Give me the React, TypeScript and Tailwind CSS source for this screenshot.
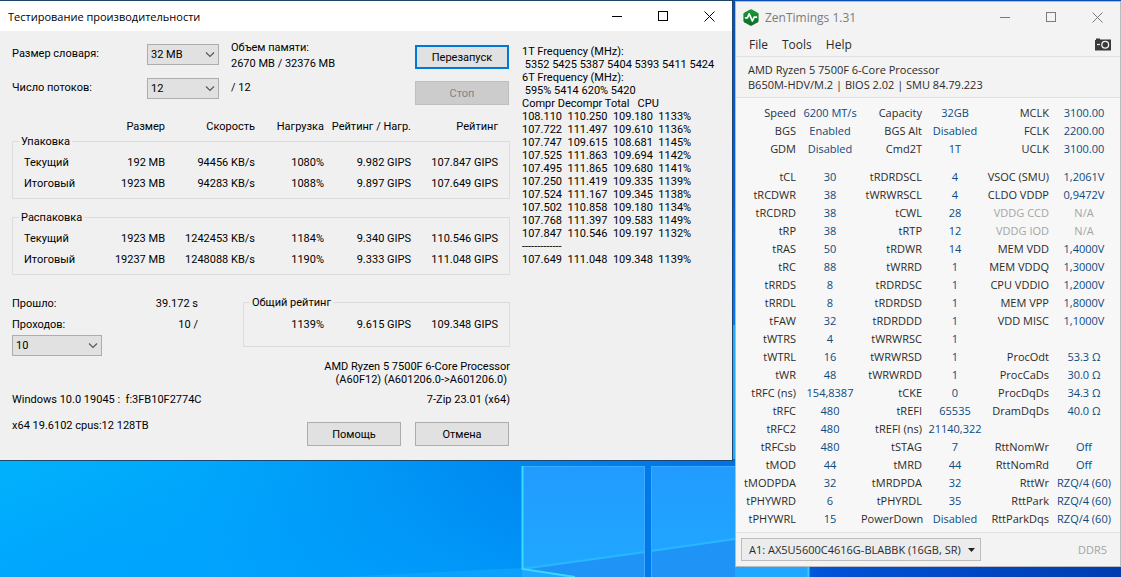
import type { ReactNode } from "react";

type Row = string[];

const packing: Row[] = [
  ["Текущий", "192 MB", "94456 KB/s", "1080%", "9.982 GIPS", "107.847 GIPS"],
  ["Итоговый", "1923 MB", "94283 KB/s", "1088%", "9.897 GIPS", "107.649 GIPS"],
];

const unpacking: Row[] = [
  ["Текущий", "1923 MB", "1242453 KB/s", "1184%", "9.340 GIPS", "110.546 GIPS"],
  ["Итоговый", "19237 MB", "1248088 KB/s", "1190%", "9.333 GIPS", "111.048 GIPS"],
];

const log = `1T Frequency (MHz):
 5352 5425 5387 5404 5393 5411 5424
6T Frequency (MHz):
 595% 5414 620% 5420
Compr Decompr Total   CPU
108.110  110.250  109.180  1133%
107.722  111.497  109.610  1136%
107.747  109.615  108.681  1145%
107.525  111.863  109.694  1142%
107.495  111.865  109.680  1141%
107.250  111.419  109.335  1139%
107.524  111.167  109.345  1138%
107.502  110.858  109.180  1134%
107.768  111.397  109.583  1149%
107.847  110.546  109.197  1132%
-------------
107.649  111.048  109.348  1139%`;

const clocks: Row[] = [
  ["Speed", "6200 MT/s", "Capacity", "32GB", "MCLK", "3100.00"],
  ["BGS", "Enabled", "BGS Alt", "Disabled", "FCLK", "2200.00"],
  ["GDM", "Disabled", "Cmd2T", "1T", "UCLK", "3100.00"],
];

const timings: Row[] = [
  ["tCL", "30", "tRDRDSCL", "4", "VSOC (SMU)", "1,2061V"],
  ["tRCDWR", "38", "tWRWRSCL", "4", "CLDO VDDP", "0,9472V"],
  ["tRCDRD", "38", "tCWL", "28", "VDDG CCD", "N/A"],
  ["tRP", "38", "tRTP", "12", "VDDG IOD", "N/A"],
  ["tRAS", "50", "tRDWR", "14", "MEM VDD", "1,4000V"],
  ["tRC", "88", "tWRRD", "1", "MEM VDDQ", "1,3000V"],
  ["tRRDS", "8", "tRDRDSC", "1", "CPU VDDIO", "1,2000V"],
  ["tRRDL", "8", "tRDRDSD", "1", "MEM VPP", "1,8000V"],
  ["tFAW", "32", "tRDRDDD", "1", "VDD MISC", "1,1000V"],
  ["tWTRS", "4", "tWRWRSC", "1", "", ""],
  ["tWTRL", "16", "tWRWRSD", "1", "ProcOdt", "53.3 Ω"],
  ["tWR", "48", "tWRWRDD", "1", "ProcCaDs", "30.0 Ω"],
  ["tRFC (ns)", "154,8387", "tCKE", "0", "ProcDqDs", "34.3 Ω"],
  ["tRFC", "480", "tREFI", "65535", "DramDqDs", "40.0 Ω"],
  ["tRFC2", "480", "tREFI (ns)", "21140,322", "", ""],
  ["tRFCsb", "480", "tSTAG", "7", "RttNomWr", "Off"],
  ["tMOD", "44", "tMRD", "44", "RttNomRd", "Off"],
  ["tMODPDA", "32", "tMRDPDA", "32", "RttWr", "RZQ/4 (60)"],
  ["tPHYWRD", "6", "tPHYRDL", "35", "RttPark", "RZQ/4 (60)"],
  ["tPHYWRL", "15", "PowerDown", "Disabled", "RttParkDqs", "RZQ/4 (60)"],
];

function Wallpaper() {
  return (
    <svg className="absolute inset-0 h-full w-full" viewBox="0 0 1121 577" preserveAspectRatio="xMidYMax slice" aria-hidden="true">
      <defs>
        <linearGradient id="sky" x1="0" y1="0" x2="1" y2="0">
          <stop offset="0" stopColor="#00b2fc" />
          <stop offset="0.18" stopColor="#00a8fb" />
          <stop offset="0.33" stopColor="#0098f6" />
          <stop offset="0.46" stopColor="#0088f0" />
          <stop offset="0.66" stopColor="#0070e6" />
          <stop offset="0.74" stopColor="#0052d6" />
          <stop offset="1" stopColor="#003cb0" />
        </linearGradient>
        <linearGradient id="glow" x1="0" y1="0" x2="0" y2="1">
          <stop offset="0" stopColor="#0098ff" stopOpacity="0" />
          <stop offset="1" stopColor="#00a0ff" stopOpacity="0.6" />
        </linearGradient>
        <linearGradient id="top" x1="0" y1="0" x2="0" y2="1">
          <stop offset="0" stopColor="#0a4fb8" />
          <stop offset="0.6" stopColor="#0060e0" />
          <stop offset="1" stopColor="#0078ff" />
        </linearGradient>
        <linearGradient id="pane" x1="0" y1="0" x2="0" y2="1">
          <stop offset="0" stopColor="#229bff" />
          <stop offset="1" stopColor="#20a8ff" />
        </linearGradient>
      </defs>
      <rect width="1121" height="577" fill="url(#sky)" />
      <rect y="461" width="522" height="116" fill="url(#glow)" />
      <rect x="522" width="599" height="325" fill="url(#top)" />
      <rect x="651" y="325" width="157" height="134" fill="#22a8ff" />
      <path d="M340 577 L522 568 L522 577Z" fill="#12a8ff" opacity="0.6" />
      <rect x="522" y="466" width="123" height="111" fill="url(#pane)" />
      <rect x="651" y="466" width="157" height="111" fill="url(#pane)" />
      <path d="M522 569 L645 552 V577 H575Z" fill="#1f93f6" />
      <path d="M651 551 L735 539 V577 H651Z" fill="#1f93f6" />
      <path d="M522 569 L645 552 M651 551 L735 539" stroke="#28b8ff" strokeWidth="2" fill="none" />
      <path d="M522 466.5 H645 M651 466.5 H735 M644.5 466 V577 M651.5 466 V577" stroke="#3fabff" strokeWidth="1" fill="none" />
      <path d="M522.5 466 V569 L575 577" stroke="#35dcff" strokeWidth="2" fill="none" />
      <path d="M808.5 466 V577" stroke="#2fd0ff" strokeWidth="2" />
    </svg>
  );
}

function CaptionButtons({ tone }: { tone: string }) {
  return (
    <div className={`flex ${tone}`}>
      <button type="button" aria-label="Свернуть" className="flex h-[30px] w-[46px] items-center justify-center">
        <svg width="11" height="11" viewBox="0 0 11 11"><path d="M0 5.5H10" stroke="currentColor" /></svg>
      </button>
      <button type="button" aria-label="Развернуть" className="flex h-[30px] w-[46px] items-center justify-center">
        <svg width="11" height="11" viewBox="0 0 11 11"><rect x="0.5" y="0.5" width="9" height="9" fill="none" stroke="currentColor" /></svg>
      </button>
      <button type="button" aria-label="Закрыть" className="flex h-[30px] w-[46px] items-center justify-center">
        <svg width="11" height="11" viewBox="0 0 11 11"><path d="M0.5 0.5L10.5 10.5M10.5 0.5L0.5 10.5" stroke="currentColor" /></svg>
      </button>
    </div>
  );
}

function Combo({ id, value, width }: { id: string; value: string; width: string }) {
  return (
    <div className={`relative h-[21px] ${width}`}>
      <select id={id} defaultValue={value} className="h-full w-full appearance-none border border-[#adadad] bg-[#e1e1e1] pl-[3px] text-[11px] leading-[19px]">
        <option>{value}</option>
      </select>
      <svg className="pointer-events-none absolute top-2 right-1" width="10" height="6" viewBox="0 0 10 6" fill="none">
        <path d="M1 0.5L5 4.5L9 0.5" stroke="#555" strokeWidth="1.1" />
      </svg>
    </div>
  );
}

function PushButton({ children }: { children: ReactNode }) {
  return (
    <button type="button" className="h-6 w-[94px] border border-[#adadad] bg-[#e1e1e1]">{children}</button>
  );
}

function StatColumns() {
  return (
    <colgroup>
      <col className="w-[61px]" />
      <col className="w-[80px]" />
      <col className="w-[90px]" />
      <col className="w-[69px]" />
      <col className="w-[87px]" />
      <col className="w-[87px]" />
    </colgroup>
  );
}

function StatGroup({ title, rows, gap }: { title: string; rows: Row[]; gap: string }) {
  return (
    <fieldset className={`min-w-0 border border-[#dcdcdc] px-[11px] py-1 ${gap}`}>
      <legend className="-ml-[5px] px-[2px]">{title}</legend>
      <table className="w-full table-fixed text-right whitespace-nowrap">
        <StatColumns />
        <tbody>
          {rows.map((row) => (
            <tr key={row[0]} className="h-[21px]">
              <th scope="row" className="p-0 text-left font-normal">{row[0]}</th>
              {row.slice(1).map((cell, i) => (
                <td key={i} className="p-0">{cell}</td>
              ))}
            </tr>
          ))}
        </tbody>
      </table>
    </fieldset>
  );
}

function BenchmarkWindow() {
  return (
    <section className="min-w-0 flex-1 self-start border-t border-r border-b border-[#1f4568] bg-[#f0f0f0] font-['Roboto','Liberation_Sans',sans-serif] text-[11px] leading-[13px] text-black">
      <header className="flex h-[30px] items-center justify-between bg-white pl-2">
        <h1 className="font-['Open_Sans','Noto_Sans',sans-serif] text-[11px]">Тестирование производительности</h1>
        <CaptionButtons tone="text-black" />
      </header>
      <div className="grid grid-cols-[498fr_210fr] gap-3 pt-[9px] pb-[14px] pl-3">
        <div>
          <div className="flex">
            <div className="flex w-[135px] flex-col gap-[13px] pt-1">
              <label htmlFor="dict" className="h-[21px] leading-[19px]">Размер словаря:</label>
              <label htmlFor="threads" className="h-[21px] leading-[19px]">Число потоков:</label>
            </div>
            <div className="flex flex-col gap-[13px] pt-1">
              <Combo id="dict" value="32 MB" width="w-[72px]" />
              <Combo id="threads" value="12" width="w-[72px]" />
            </div>
            <div className="flex-1 pl-3 leading-[16px]">
              <p>Объем памяти:</p>
              <p>2670 MB / 32376 MB</p>
              <p className="pt-2">/ 12</p>
            </div>
            <div className="flex flex-col gap-3 pt-[5px] pr-px">
              <button type="button" className="h-6 w-[94px] border-2 border-[#0078d7] bg-[#e1e1e1]">Перезапуск</button>
              <button type="button" disabled className="h-6 w-[94px] border border-[#bfbfbf] bg-[#cccccc] text-[#838383]">Стоп</button>
            </div>
          </div>

          <div className="px-3 pt-[15px]">
            <table className="w-full table-fixed text-right whitespace-nowrap">
              <StatColumns />
              <thead>
                <tr>
                  <td className="p-0" />
                  <th scope="col" className="p-0 font-normal">Размер</th>
                  <th scope="col" className="p-0 font-normal">Скорость</th>
                  <th scope="col" className="p-0 font-normal">Нагрузка</th>
                  <th scope="col" className="p-0 font-normal">Рейтинг / Нагр.</th>
                  <th scope="col" className="p-0 font-normal">Рейтинг</th>
                </tr>
              </thead>
            </table>
          </div>

          <StatGroup title="Упаковка" rows={packing} gap="mt-[2px]" />
          <StatGroup title="Распаковка" rows={unpacking} gap="mt-3" />

          <div className="flex pt-[18px]">
            <div className="w-[186px] leading-[21px]">
              <p className="flex justify-between"><span>Прошло:</span><span>39.172 s</span></p>
              <p className="flex justify-between"><label htmlFor="passes">Проходов:</label><span>10 /</span></p>
              <Combo id="passes" value="10" width="w-[90px]" />
            </div>
            <fieldset className="mt-[3px] ml-[45px] min-w-0 flex-1 self-start border border-[#dcdcdc] px-[11px] pt-[5px] pb-[11px]">
              <legend className="-ml-[5px] px-[2px]">Общий рейтинг</legend>
              <table className="w-full table-fixed text-right whitespace-nowrap">
                <colgroup>
                  <col className="w-[69px]" />
                  <col className="w-[87px]" />
                  <col className="w-[87px]" />
                </colgroup>
                <tbody>
                  <tr className="h-[21px]">
                    <td className="p-0">1139%</td>
                    <td className="p-0">9.615 GIPS</td>
                    <td className="p-0">109.348 GIPS</td>
                  </tr>
                </tbody>
              </table>
            </fieldset>
          </div>

          <div className="pt-1 text-right">
            <p>AMD Ryzen 5 7500F 6-Core Processor</p>
            <p className="pr-[3px]">(A60F12) (A601206.0-&gt;A601206.0)</p>
          </div>
          <div className="flex justify-between pt-[7px] whitespace-pre">
            <p>{"Windows 10.0 19045 :  f:3FB10F2774C"}</p>
            <p>7-Zip 23.01 (x64)</p>
          </div>
          <div className="flex items-start justify-between pt-[13px]">
            <p>x64 19.6102 cpus:12 128TB</p>
            <div className="flex gap-[14px] pt-[3px] pr-px">
              <PushButton>Помощь</PushButton>
              <PushButton>Отмена</PushButton>
            </div>
          </div>
        </div>
        <pre className="min-w-0 pt-[5px] font-['Roboto','Liberation_Sans',sans-serif]">{log}</pre>
      </div>
    </section>
  );
}

function TimingRows({ rows, first }: { rows: Row[]; first: string }) {
  return (
    <tbody>
      {rows.map((row, r) => {
        const pad = r === 0 ? first : "pt-0";
        const off = row[5] === "N/A";
        return (
          <tr key={row[0]}>
            {row.map((cell, c) =>
              c % 2 === 0 ? (
                <th key={c} scope="row" className={`px-0 pb-0 text-right font-normal ${pad} ${off && c === 4 ? "text-[#a5a5a5]" : "text-[#2b2b2b]"}`}>{cell}</th>
              ) : (
                <td key={c} className={`pr-0 pb-0 pl-[3px] text-center ${pad} ${off && c === 5 ? "text-[#a5a5a5]" : "text-[#0d4a80]"}`}>{cell}</td>
              ),
            )}
          </tr>
        );
      })}
    </tbody>
  );
}

function ZenWindow() {
  return (
    <section className="mt-px w-[386px] shrink-0 self-start border border-[#bcbcbc] bg-[#f3f3f3] font-['Open_Sans','Noto_Sans',sans-serif] text-[11px] leading-[15px] text-[#2b2b2b]">
      <header className="flex h-[30px] items-center justify-between pl-[7px]">
        <div className="flex items-center gap-[6px]">
          <svg width="16" height="17" viewBox="0 0 16 17">
            <defs>
              <linearGradient id="hex" x1="0" y1="0" x2="0" y2="1">
                <stop offset="0" stopColor="#1c9a3a" />
                <stop offset="1" stopColor="#0c6b2a" />
              </linearGradient>
            </defs>
            <path d="M7 0.5Q8 0 9 0.5L14.8 3.8Q15.6 4.3 15.6 5.2V11.8Q15.6 12.7 14.8 13.2L9 16.5Q8 17 7 16.5L1.2 13.2Q0.4 12.7 0.4 11.8V5.2Q0.4 4.3 1.2 3.8Z" fill="url(#hex)" />
            <path d="M2.6 8.8H4.4L6.2 4.8L9.4 12L11.2 8.2H13.4" fill="none" stroke="#fff" strokeWidth="1.7" strokeLinejoin="round" strokeLinecap="round" />
          </svg>
          <h2 className="text-[12px] text-[#7b7b7b]">ZenTimings 1.31</h2>
        </div>
        <CaptionButtons tone="text-[#7b7b7b]" />
      </header>
      <nav className="flex h-[25px] items-center justify-between border-b border-[#e0e0e0] pr-[9px] pl-[13px] text-[12px]">
        <div className="flex gap-[14px]">
          <button type="button">File</button>
          <button type="button">Tools</button>
          <button type="button">Help</button>
        </div>
        <button type="button" aria-label="Screenshot">
          <svg width="16" height="13" viewBox="0 0 16 13">
            <path d="M0 2H1V0.5H5V1.4H16V12.5H0Z" fill="#3a3a3a" />
            <path d="M2 6.5H5" stroke="#f3f3f3" strokeWidth="1.2" />
            <circle cx="10.2" cy="6.8" r="3.4" fill="none" stroke="#f3f3f3" strokeWidth="1.3" />
          </svg>
        </button>
      </nav>
      <div className="border-b border-[#e0e0e0] px-3 pt-[5px] pb-[5px]">
        <p>AMD Ryzen 5 7500F 6-Core Processor</p>
        <p>B650M-HDV/M.2 | BIOS 2.02 | SMU 84.79.223</p>
      </div>
      <div className="border-b border-[#e0e0e0] bg-[#f7f7f7] pt-[6px] pr-1 pb-1">
        <table className="w-full table-fixed leading-[18px] whitespace-nowrap">
          <colgroup>
            <col className="w-[60px]" />
            <col className="w-[65px]" />
            <col className="w-[61px]" />
            <col className="w-[63px]" />
            <col className="w-[64px]" />
            <col className="w-[67px]" />
          </colgroup>
          <TimingRows rows={clocks} first="pt-0" />
          <TimingRows rows={timings} first="pt-[10px]" />
        </table>
      </div>
      <footer className="flex items-center justify-between pt-[5px] pr-[13px] pb-[5px] pl-[5px]">
        <div className="relative h-[23px] w-[240px]">
          <select aria-label="Модуль памяти" className="h-full w-full appearance-none border border-[#bcbcbc] bg-[#ececec] pl-[7px] text-[11px]">
            <option>A1: AX5U5600C4616G-BLABBK (16GB, SR)</option>
          </select>
          <svg className="pointer-events-none absolute top-[10px] right-[6px]" width="7" height="4" viewBox="0 0 7 4">
            <path d="M0 0H7L3.5 4Z" fill="#222" />
          </svg>
        </div>
        <span className="text-[#a5a5a5]">DDR5</span>
      </footer>
    </section>
  );
}

export default function App() {
  return (
    <main className="relative min-h-screen overflow-hidden">
      <Wallpaper />
      <div className="relative flex gap-[2px]">
        <BenchmarkWindow />
        <ZenWindow />
      </div>
    </main>
  );
}
